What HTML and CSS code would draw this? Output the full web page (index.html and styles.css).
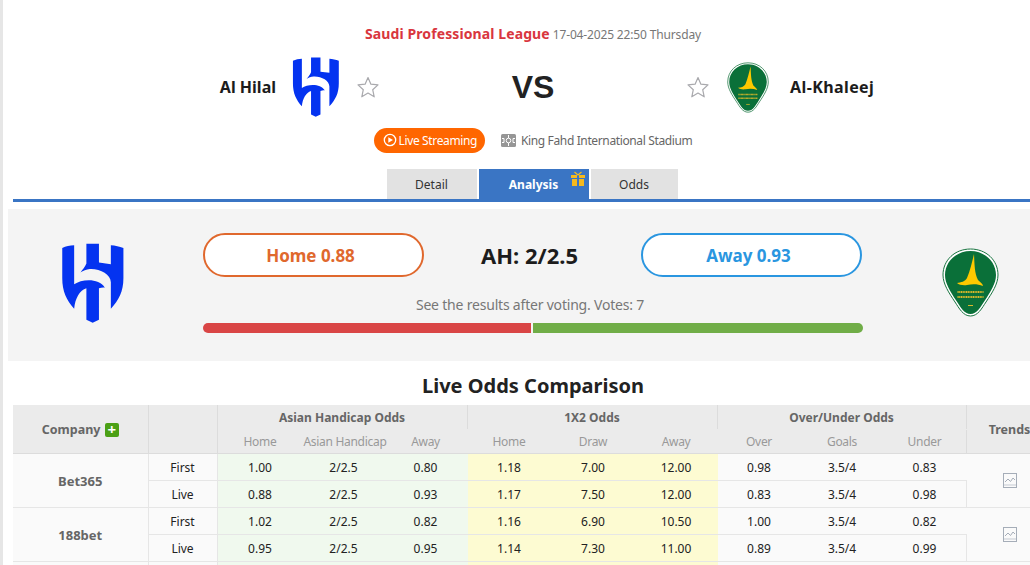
FILE: index.html
```html
<!DOCTYPE html>
<html lang="en">
<head>
<meta charset="utf-8">
<title>Al Hilal vs Al-Khaleej</title>
<link rel="stylesheet" href="styles.css">
</head>
<body>
<svg class="defs" width="0" height="0" aria-hidden="true">
  <symbol id="hilal" viewBox="187 143 186 242">
    <path fill="#0433f0" d="M187 158C198 153 210 151 223 150V268C245 252 298 248 316 278C310 277 304 278 298 280V375L279 384L260 375V280C240 286 226 310 223 342C200 316 187 290 187 250Z"/>
    <path fill="#0433f0" d="M260 145H298V202L334 207V150C347 151 360 154 372 158V250C372 290 358 316 334 342V262C334 238 300 220 270 222C260 223 250 227 242 232C250 222 256 215 260 205Z"/>
  </symbol>
  <symbol id="khaleej" viewBox="0 0 57 69">
    <path fill="#fff" stroke="#16733e" stroke-width="1" d="M28.500 1C44 1 56 12 56 27C56 36 50 45 44 54C40 60 36 68 28.500 68C21 68 17 60 13 54C7 45 1 36 1 27C1 12 13 1 28.500 1Z"/>
    <path fill="#0a7039" d="M28.500 3C42.500 3 54 13.500 54 27C54 35.500 48.500 44 42.500 53C38.500 59 35 66 28.500 66C22 66 18.500 59 14.500 53C8.500 44 3 35.500 3 27C3 13.500 14.500 3 28.500 3Z"/>
    <path fill="#fdc900" d="M32 6C32.500 16 32.500 26 36 32C38 34 41 36 41 38C36 36 31 35.500 25 37C21.500 37.500 17 37 15 35C19 34.500 23 33.500 25 30C28 23 30 14 32 6Z"/>
    <path stroke="#d9b82a" stroke-width="2" stroke-dasharray="1.200 .5" d="M15.500 44H41.500M15.500 49H41.500"/>
    <path stroke="#d9b82a" stroke-width="1" d="M26 57.500H31"/>
  </symbol>
  <symbol id="star" viewBox="0 0 22 22">
    <path fill="#fff" stroke="#a9a9ad" stroke-width="1.200" stroke-linejoin="round" d="M11 1.500L13.900 8.200L21 8.900L15.700 13.700L17.200 20.800L11 17.100L4.800 20.800L6.300 13.700L1 8.900L8.100 8.200Z"/>
  </symbol>
  <symbol id="trend" viewBox="0 0 14 15">
    <rect x=".5" y=".5" width="13" height="14" fill="#fafafa" stroke="#a5adb8" stroke-width="1"/>
    <path fill="none" stroke="#a5adb8" stroke-width="1" d="M2 9L5 6L7.500 8.500L10 5L12 7"/>
    <path stroke="#c5cad2" stroke-width="1" d="M1 12H13"/>
  </symbol>
</svg>

<div class="page">
  <header class="match">
    <p class="league"><strong>Saudi Professional League</strong> <span>17-04-2025 22:50 Thursday</span></p>
    <div class="teams">
      <div class="team team-home">
        <span class="team-name">Al Hilal</span>
        <svg class="logo-hilal-sm"><use href="#hilal"/></svg>
        <svg class="star"><use href="#star"/></svg>
      </div>
      <div class="vs">VS</div>
      <div class="team team-away">
        <svg class="star"><use href="#star"/></svg>
        <svg class="logo-khaleej-sm"><use href="#khaleej"/></svg>
        <span class="team-name">Al-Khaleej</span>
      </div>
    </div>
    <div class="meta">
      <a class="live">
        <svg class="play" viewBox="0 0 14 14"><circle cx="7" cy="7" r="5.700" fill="none" stroke="#fff" stroke-width="1.300"/><path fill="#fff" d="M5.300 4.200L10 7L5.300 9.800Z"/></svg>
        Live Streaming
      </a>
      <span class="venue">
        <svg class="field" viewBox="0 0 15 13"><rect width="15" height="13" rx="1.500" fill="#969696"/><circle cx="7.500" cy="6.500" r="2.300" fill="none" stroke="#fff" stroke-width="1"/><path fill="none" stroke="#fff" stroke-width="1" d="M7.500 1V4M7.500 9V12M1 4.500H3V8.500H1M14 4.500H12V8.500H14"/></svg>
        King Fahd International Stadium
      </span>
    </div>
    <nav class="tabs">
      <a class="tab tab-detail">Detail</a>
      <a class="tab tab-analysis">Analysis
        <svg class="gift" viewBox="0 0 14 15"><path fill="#f5b91e" d="M0 4H6V7H0ZM8 4H14V7H8ZM1 8H6V15H1ZM8 8H13V15H8Z"/><path fill="none" stroke="#f5b91e" stroke-width="1.300" d="M7 4L3.500 1M7 4L10.500 1"/></svg>
      </a>
      <a class="tab tab-odds">Odds</a>
    </nav>
  </header>

  <section class="vote">
    <svg class="logo-hilal-lg"><use href="#hilal"/></svg>
    <div class="vote-main">
      <div class="vote-row">
        <button class="pick pick-home">Home 0.88</button>
        <span class="ah">AH: 2/2.5</span>
        <button class="pick pick-away">Away 0.93</button>
      </div>
      <p class="vote-note">See the results after voting. Votes: 7</p>
      <div class="bar"><i class="bar-home"></i><i class="bar-away"></i></div>
    </div>
    <svg class="logo-khaleej-lg"><use href="#khaleej"/></svg>
  </section>

  <h2 class="odds-title">Live Odds Comparison</h2>

  <table class="odds">
    <colgroup>
      <col class="c-company"><col class="c-type">
      <col class="c1"><col class="c2"><col class="c3">
      <col class="c4"><col class="c5"><col class="c6">
      <col class="c7"><col class="c8"><col class="c9">
      <col class="c-trend">
    </colgroup>
    <thead>
      <tr class="head-top">
        <th rowspan="2" class="company-head">Company <span class="plus">+</span></th>
        <th rowspan="2"></th>
        <th colspan="3">Asian Handicap Odds</th>
        <th colspan="3">1X2 Odds</th>
        <th colspan="3">Over/Under Odds</th>
        <th rowspan="2" class="trend-head">Trends</th>
      </tr>
      <tr class="head-sub">
        <th>Home</th><th>Asian Handicap</th><th>Away</th>
        <th>Home</th><th>Draw</th><th>Away</th>
        <th>Over</th><th>Goals</th><th>Under</th>
      </tr>
    </thead>
    <tbody>
      <tr>
        <td rowspan="2" class="company">Bet365</td><td>First</td>
        <td class="ah-cell">1.00</td><td class="ah-cell">2/2.5</td><td class="ah-cell">0.80</td>
        <td class="x-cell">1.18</td><td class="x-cell">7.00</td><td class="x-cell">12.00</td>
        <td class="ou-cell">0.98</td><td class="ou-cell">3.5/4</td><td class="ou-cell">0.83</td>
        <td rowspan="2"><svg class="trend"><use href="#trend"/></svg></td>
      </tr>
      <tr>
        <td>Live</td>
        <td class="ah-cell">0.88</td><td class="ah-cell">2/2.5</td><td class="ah-cell">0.93</td>
        <td class="x-cell">1.17</td><td class="x-cell">7.50</td><td class="x-cell">12.00</td>
        <td class="ou-cell">0.83</td><td class="ou-cell">3.5/4</td><td class="ou-cell">0.98</td>
      </tr>
      <tr>
        <td rowspan="2" class="company">188bet</td><td>First</td>
        <td class="ah-cell">1.02</td><td class="ah-cell">2/2.5</td><td class="ah-cell">0.82</td>
        <td class="x-cell">1.16</td><td class="x-cell">6.90</td><td class="x-cell">10.50</td>
        <td class="ou-cell">1.00</td><td class="ou-cell">3.5/4</td><td class="ou-cell">0.82</td>
        <td rowspan="2"><svg class="trend"><use href="#trend"/></svg></td>
      </tr>
      <tr>
        <td>Live</td>
        <td class="ah-cell">0.95</td><td class="ah-cell">2/2.5</td><td class="ah-cell">0.95</td>
        <td class="x-cell">1.14</td><td class="x-cell">7.30</td><td class="x-cell">11.00</td>
        <td class="ou-cell">0.89</td><td class="ou-cell">3.5/4</td><td class="ou-cell">0.99</td>
      </tr>
      <tr>
        <td class="company"></td><td></td>
        <td class="ah-cell"></td><td class="ah-cell"></td><td class="ah-cell"></td>
        <td class="x-cell"></td><td class="x-cell"></td><td class="x-cell"></td>
        <td class="ou-cell"></td><td class="ou-cell"></td><td class="ou-cell"></td><td></td>
      </tr>
    </tbody>
  </table>
</div>
</body>
</html>
```
FILE: styles.css
```css
html, body {
  margin: 0;
  height: 565px;
  overflow: hidden;
  background: #fff;
}
body {
  font-family: "Noto Sans", "Liberation Sans", sans-serif;
  font-size: 12px;
  color: #222;
}
.defs { position: absolute; }
.page {
  width: 1040px;
  height: 565px;
  border-left: 3px solid #e6e6e6;
  padding-left: 10px;
  box-sizing: content-box;
}
.match { height: 202px; display: flex; flex-direction: column; }
.league {
  margin: 0;
  padding-top: 25px;
  height: 18px;
  line-height: 18px;
  text-align: center;
  color: #777;
  letter-spacing: -.15px;
}
.league strong { color: #d9363e; font-size: 14px; font-weight: 700; letter-spacing: .1px; }
.teams {
  display: grid;
  grid-template-columns: 366px 308px 1fr;
  align-items: center;
  height: 60px;
  margin-top: 14px;
}
.team { display: flex; align-items: center; }
.team-home { justify-content: flex-end; }
.team-name { font-size: 16px; font-weight: 700; color: #1c1c1c; }
.team-away .team-name { letter-spacing: .4px; }
.logo-hilal-sm { width: 48px; height: 60px; margin: 0 17px 0 16px; }
.logo-khaleej-sm { width: 42px; height: 51px; margin: 0 21px 0 18px; }
.star { width: 22px; height: 22px; }
.vs { text-align: center; font-family: "Liberation Sans", sans-serif; font-size: 32px; font-weight: 700; color: #222; }
.meta {
  display: flex;
  justify-content: center;
  align-items: center;
  gap: 16px;
  height: 26px;
  margin-top: 10px;
  letter-spacing: -.37px;
}
.live {
  display: flex;
  align-items: center;
  gap: 2px;
  height: 25px;
  padding: 0 8px 0 9px;
  border-radius: 13px;
  background: #ff6600;
  color: #fff;
}
.play { width: 14px; height: 14px; }
.venue { display: flex; align-items: center; gap: 5px; color: #666; }
.field { width: 15px; height: 13px; }
.tabs {
  display: flex;
  justify-content: center;
  gap: 2px;
  height: 30px;
  padding-right: 2px;
  margin-top: 16px;
  border-bottom: 3px solid #3a75c4;
}
.tab {
  position: relative;
  display: flex;
  align-items: center;
  justify-content: center;
  background: #e2e2e2;
  color: #333;
}
.tab-detail { width: 90px; }
.tab-analysis { width: 110px; background: #3a75c4; color: #fff; font-weight: 700; }
.tab-odds { width: 87px; }
.gift { position: absolute; right: 4px; top: 2px; width: 14px; height: 15px; }

.vote {
  display: flex;
  align-items: flex-start;
  height: 152px;
  margin: 7px -20px 0 -5px;
  background: #f4f4f4;
}
.logo-hilal-lg { width: 62px; height: 80px; margin: 34px 79px 0 54px; flex: none; }
.vote-main { width: 660px; flex: none; padding-top: 24px; }
.vote-row { display: flex; align-items: center; justify-content: space-between; width: 659px; }
.pick {
  width: 221px;
  height: 44px;
  padding: 0 6px 0 0;
  border-radius: 22px;
  background: #fff;
  font-family: inherit;
  font-size: 17px;
  font-weight: 700;
  cursor: pointer;
}
.pick-home { border: 2px solid #e0682d; color: #e0682d; }
.pick-away { border: 2px solid #2a96e0; color: #2a96e0; }
.ah { margin-right: 6px; font-size: 22px; font-weight: 700; color: #1c1c1c; }
.vote-note { margin: 18px 0 0; padding-right: 6px; height: 20px; line-height: 20px; text-align: center; font-size: 14px; color: #777; letter-spacing: -.2px; }
.bar { display: flex; gap: 2px; height: 10px; margin-top: 8px; }
.bar i { display: block; height: 10px; }
.bar-home { width: 328px; background: #d94545; border-radius: 5px 0 0 5px; }
.bar-away { width: 330px; background: #70ad47; border-radius: 0 5px 5px 0; }
.logo-khaleej-lg { width: 57px; height: 69px; margin: 39px 0 0 79px; flex: none; }

.odds-title {
  margin: 0;
  height: 44px;
  line-height: 50px;
  text-align: center;
  font-size: 20px;
  font-weight: 700;
  color: #222;
}
.odds {
  width: 1040px;
  table-layout: fixed;
  border-collapse: collapse;
  text-align: center;
}
.c-company { width: 135px; }
.c-type { width: 69px; }
.c1 { width: 86px; } .c2 { width: 81px; } .c3 { width: 83px; }
.c4 { width: 84px; } .c5 { width: 84px; } .c6 { width: 82px; }
.c7 { width: 84px; } .c8 { width: 82px; } .c9 { width: 83px; }
.c-trend { width: 87px; }
.odds th { background: #ebebeb; border: 1px solid #dcdcdc; font-weight: 700; color: #666; padding: 0; white-space: nowrap; }
.odds thead tr:first-child th { border-top: 0; }
.head-top th { height: 24px; border-bottom-color: #ebebeb; }
.head-sub th { height: 23px; font-weight: 400; color: #999; letter-spacing: -.3px; border-left-color: #ebebeb; border-right-color: #ebebeb; border-top-color: #ebebeb; }
.odds .head-top th[rowspan] { border-bottom-color: #dcdcdc; }
.company-head, .trend-head { font-size: 12.500px; }
.odds th:first-child { border-left: 0; }
.plus {
  display: inline-block;
  width: 14px;
  height: 14px;
  margin-left: 1px;
  border-radius: 2px;
  background: #4ba015;
  color: #fff;
  font-size: 15px;
  line-height: 13px;
  vertical-align: -1px;
}
.odds td {
  height: 26px;
  padding: 0;
  background: #fafafa;
  border: 1px solid #e6e6e6;
  color: #222;
}
.odds td:first-child { border-left: 0; }
.odds td.ah-cell { background: #f0f9ee; border-left-color: #f0f9ee; border-right-color: #f0f9ee; }
.odds td.x-cell { background: #fdfbd2; border-left-color: #fdfbd2; border-right-color: #fdfbd2; }
.odds td.ou-cell { border-left-color: #fafafa; border-right-color: #fafafa; }
.odds td.ou-cell:last-of-type { border-right-color: #e6e6e6; }
.odds td.company { font-size: 13px; font-weight: 700; color: #666; }
.trend { display: block; width: 14px; height: 15px; margin: 0 auto; }
```
